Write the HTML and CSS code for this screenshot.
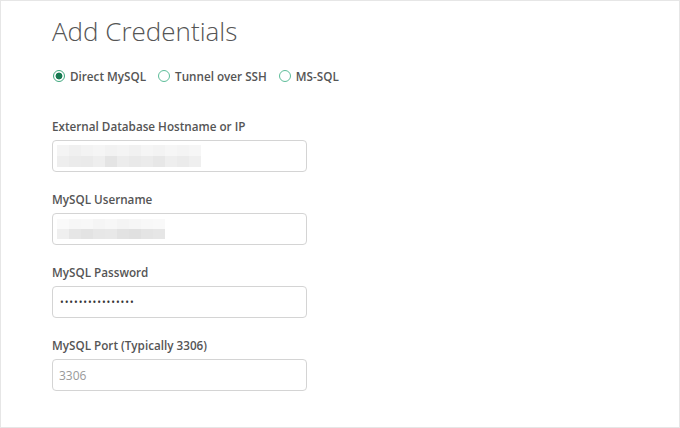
FILE: index.html
```html
<!DOCTYPE html>
<html>
<head>
<meta charset="utf-8">
<link rel="stylesheet" href="styles.css">
</head>
<body>
<div class="page">
  <h1 class="title">Add Credentials</h1>
  <div class="radios">
    <label class="radio"><span class="dot checked"></span>Direct MySQL</label>
    <label class="radio"><span class="dot"></span>Tunnel over SSH</label>
    <label class="radio"><span class="dot"></span>MS-SQL</label>
  </div>
  <div class="field">
    <div class="label">External Database Hostname or IP</div>
    <div class="input">
      <div class="blur wide">
        <div class="row"><i style="background:#f4f4f4"></i><i style="background:#f0f0f0"></i><i style="background:#f3f3f3"></i><i style="background:#f5f5f5"></i><i style="background:#f2f2f2"></i><i style="background:#f4f4f4"></i><i style="background:#f1f1f1"></i><i style="background:#f5f5f5"></i><i style="background:#f3f3f3"></i><i style="background:#f6f6f6"></i><i style="background:#f4f4f4"></i><i style="background:#f6f6f6"></i></div>
        <div class="row"><i style="background:#eeeeee"></i><i style="background:#ebebeb"></i><i style="background:#eaeaea"></i><i style="background:#eeeeee"></i><i style="background:#e4e4e4"></i><i style="background:#ececec"></i><i style="background:#e9e9e9"></i><i style="background:#ebebeb"></i><i style="background:#e7e7e7"></i><i style="background:#eeeeee"></i><i style="background:#ebebeb"></i><i style="background:#efefef"></i></div>
      </div>
    </div>
  </div>
  <div class="field">
    <div class="label">MySQL Username</div>
    <div class="input">
      <div class="blur narrow">
        <div class="row"><i style="background:#fafafa"></i><i style="background:#f7f7f7"></i><i style="background:#f8f8f8"></i><i style="background:#f5f5f5"></i><i style="background:#f7f7f7"></i><i style="background:#f4f4f4"></i><i style="background:#f6f6f6"></i><i style="background:#f8f8f8"></i><i style="background:#f9f9f9"></i></div>
        <div class="row"><i style="background:#efefef"></i><i style="background:#e6e6e6"></i><i style="background:#e3e3e3"></i><i style="background:#e7e7e7"></i><i style="background:#e8e8e8"></i><i style="background:#e2e2e2"></i><i style="background:#e0e0e0"></i><i style="background:#e4e4e4"></i><i style="background:#e6e6e6"></i></div>
      </div>
    </div>
  </div>
  <div class="field">
    <div class="label">MySQL Password</div>
    <div class="input"><span class="dots">••••••••••••••••</span></div>
  </div>
  <div class="field">
    <div class="label">MySQL Port (Typically 3306)</div>
    <div class="input"><span class="placeholder">3306</span></div>
  </div>
</div>
</body>
</html>
```
FILE: styles.css
```css
html, body {
  margin: 0;
  padding: 0;
  background: #fff;
}
.page {
  box-sizing: border-box;
  width: 680px;
  height: 428px;
  border: 1px solid #e6e6e6;
  padding: 13px 0 0 51px;
  font-family: "Open Sans", "Noto Sans", sans-serif;
  color: #444;
}
.title {
  margin: 0;
  font-size: 26px;
  font-weight: 300;
  color: #555;
  line-height: 34px;
}
.radios {
  display: flex;
  align-items: center;
  margin-top: 19px;
  gap: 11px;
}
.radio {
  display: flex;
  align-items: center;
  gap: 5px;
  font-size: 11.7px;
  font-weight: 600;
  color: #555;
  line-height: 18px;
}
.dot {
  box-sizing: border-box;
  width: 12px;
  height: 12px;
  border-radius: 50%;
  border: 1.5px solid #5dbd99;
  margin-left: 1px;
}
.dot.checked {
  border: 1.5px solid #3fa87e;
  background: radial-gradient(circle, #187a52 0 3.2px, #fff 3.7px);
}
.field {
  margin-top: 31px;
  width: 255px;
}
.field + .field {
  margin-top: 17px;
}
.label {
  font-size: 11.7px;
  font-weight: 600;
  color: #555;
  line-height: 20px;
}
.input {
  box-sizing: border-box;
  margin-top: 4px;
  height: 32px;
  border: 1px solid #d4d4d4;
  border-radius: 4px;
  display: flex;
  align-items: center;
  padding: 0 6px;
}
.blur {
  display: flex;
  flex-direction: column;
  margin-left: -2px;
}
.blur .row {
  display: flex;
}
.blur i {
  display: block;
  width: 12px;
  height: 11px;
}
.blur.narrow i { height: 10px; }
.dots {
  font-size: 10px;
  letter-spacing: 0.9px;
  color: #333;
  margin-left: 1px;
}
.placeholder {
  font-size: 12px;
  color: #999;
}
```
